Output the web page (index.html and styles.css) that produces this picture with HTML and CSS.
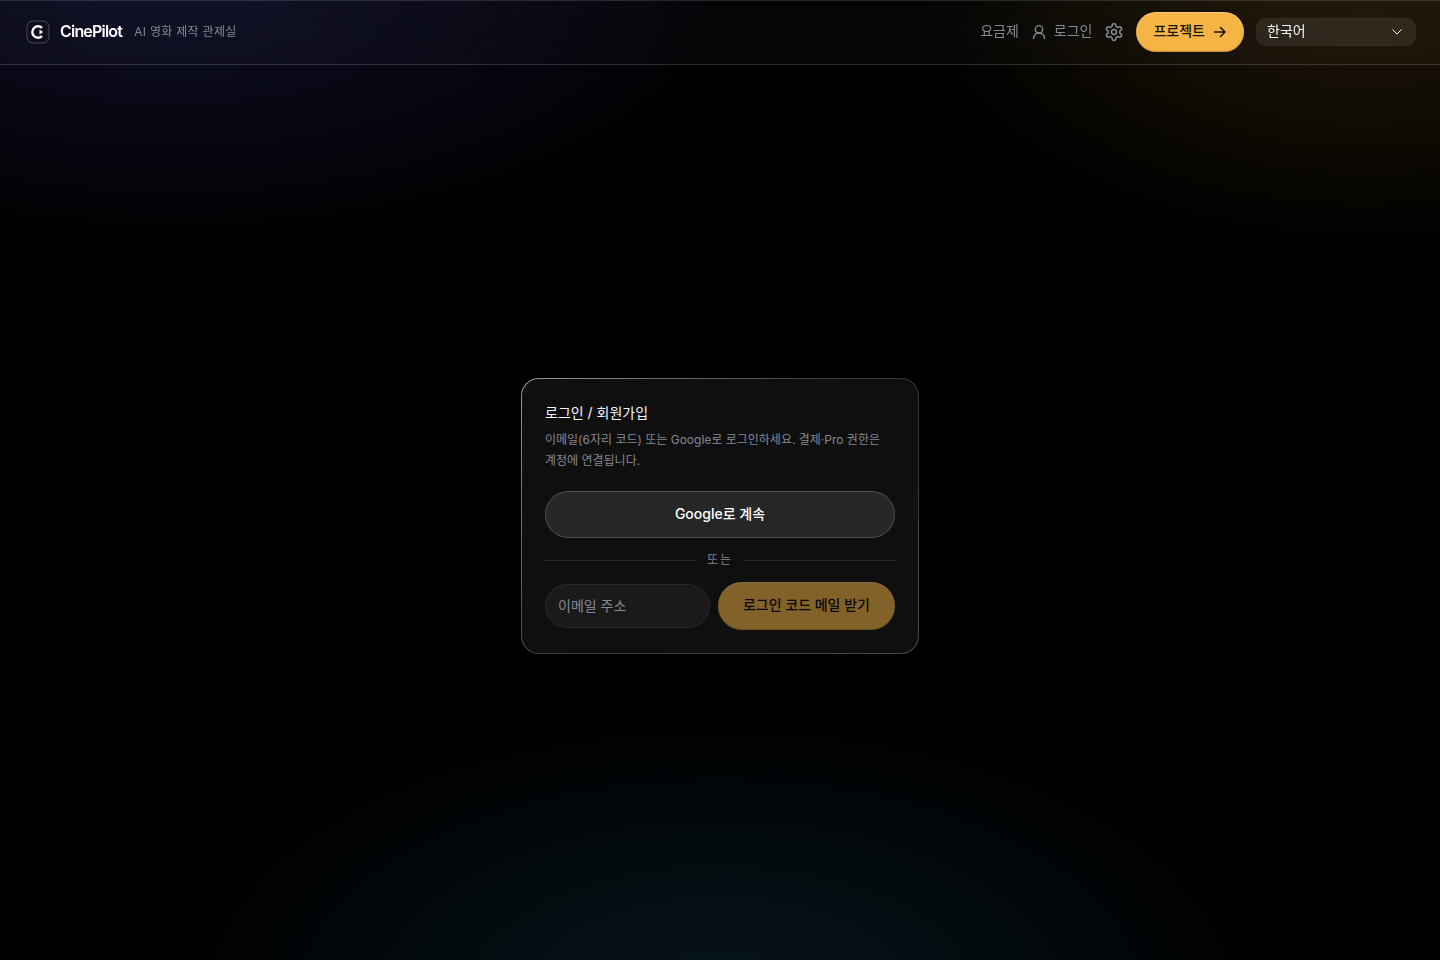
FILE: index.html
```html
<!DOCTYPE html>
<html lang="ko">
<head>
    <meta charset="UTF-8">
    <meta name="viewport" content="width=device-width, initial-scale=1.0">
    <title>CinePilot</title>
    <link rel="stylesheet" href="styles.css">
</head>
<body>
    <header class="topbar">
        <a class="brand" href="#">
            <svg class="brand-logo" viewBox="0 0 24 24" fill="none" aria-hidden="true">
                <rect x="1" y="1" width="22" height="22" rx="6" stroke="#fff" stroke-opacity=".25"/>
                <path d="M16 7.900A5.700 5.700 0 1 0 16 16.100" stroke="#fff" stroke-width="2.400"/>
                <path d="M13.500 9.500v5l3.700-2.500z" fill="#fff"/>
            </svg>
            <span class="brand-name">CinePilot</span>
            <span class="brand-tag">AI 영화 제작 관제실</span>
        </a>
        <nav class="nav">
            <a class="nav-link" href="#">요금제</a>
            <a class="nav-link" href="#">
                <svg width="16" height="16" viewBox="0 0 16 16" fill="none" stroke="currentColor" stroke-width="1.4" stroke-linecap="round" aria-hidden="true">
                    <circle cx="8" cy="5.300" r="3.700"/>
                    <path d="M2.500 14.600C2.500 11.300 4.700 9 8 9s5.500 2.300 5.500 5.600"/>
                </svg>
                로그인
            </a>
            <button class="icon-btn" type="button" aria-label="설정">
                <svg width="20" height="20" viewBox="0 0 24 24" fill="none" stroke="currentColor" stroke-width="1.900" stroke-linecap="round" stroke-linejoin="round" aria-hidden="true">
                    <path d="M12.220 2h-.440a2 2 0 0 0-2 2v.180a2 2 0 0 1-1 1.730l-.430.250a2 2 0 0 1-2 0l-.150-.080a2 2 0 0 0-2.730.730l-.220.380a2 2 0 0 0 .730 2.730l.150.100a2 2 0 0 1 1 1.720v.510a2 2 0 0 1-1 1.740l-.150.090a2 2 0 0 0-.730 2.730l.220.380a2 2 0 0 0 2.730.730l.150-.080a2 2 0 0 1 2 0l.430.250a2 2 0 0 1 1 1.730V20a2 2 0 0 0 2 2h.440a2 2 0 0 0 2-2v-.180a2 2 0 0 1 1-1.730l.430-.250a2 2 0 0 1 2 0l.150.080a2 2 0 0 0 2.730-.730l.220-.390a2 2 0 0 0-.730-2.730l-.150-.080a2 2 0 0 1-1-1.740v-.500a2 2 0 0 1 1-1.740l.150-.090a2 2 0 0 0 .730-2.730l-.220-.380a2 2 0 0 0-2.730-.730l-.150.080a2 2 0 0 1-2 0l-.430-.250a2 2 0 0 1-1-1.730V4a2 2 0 0 0-2-2z"/>
                    <circle cx="12" cy="12" r="3"/>
                </svg>
            </button>
            <a class="btn btn-primary btn-sm" href="#">
                프로젝트
                <svg width="14" height="14" viewBox="0 0 14 14" fill="none" stroke="currentColor" stroke-width="1.500" stroke-linecap="round" stroke-linejoin="round" aria-hidden="true">
                    <path d="M1.500 7h10.500M7.500 2.500L12 7l-4.500 4.500"/>
                </svg>
            </a>
            <div class="lang">
                <select class="lang-select" aria-label="언어">
                    <option>한국어</option>
                    <option>English</option>
                </select>
                <svg class="lang-arrow" width="10" height="6" viewBox="0 0 10 6" fill="none" stroke="currentColor" aria-hidden="true">
                    <path d="M.5.500L5 5 9.500.500"/>
                </svg>
            </div>
        </nav>
    </header>

    <main class="page">
        <section class="card">
            <h1 class="card-title">로그인 / 회원가입</h1>
            <p class="card-text">이메일(6자리 코드) 또는 Google로 로그인하세요. 결제·Pro 권한은 계정에 연결됩니다.</p>
            <button class="btn btn-google" type="button">Google로 계속</button>
            <div class="divider">또는</div>
            <form class="email-form">
                <input class="email-input" type="email" placeholder="이메일 주소" aria-label="이메일 주소">
                <button class="btn btn-primary" type="submit" disabled>로그인 코드 메일 받기</button>
            </form>
        </section>
    </main>
</body>
</html>
```

FILE: styles.css
```css
* {
    box-sizing: border-box;
}
body {
    margin: 0;
    min-height: 100vh;
    display: flex;
    flex-direction: column;
    font-family: Inter, "Noto Sans CJK KR", sans-serif;
    font-size: 14px;
    line-height: 20px;
    word-break: keep-all;
    color: #f5f5f7;
    background:
        radial-gradient(620px 300px at 12% -5%, rgba(84, 88, 230, 0.19), transparent),
        radial-gradient(480px 300px at 95% -5%, rgba(255, 184, 64, 0.14), transparent),
        radial-gradient(560px 290px at 50% 104%, rgba(50, 173, 230, 0.12), transparent),
        #000;
}
a {
    color: inherit;
    text-decoration: none;
}
button, input, select {
    font: inherit;
    color: inherit;
}

/* Top bar */
.topbar {
    display: flex;
    align-items: center;
    justify-content: space-between;
    height: 65px;
    padding: 0 24px 2px;
    background: rgba(255, 255, 255, 0.02);
    backdrop-filter: blur(20px);
    border-top: 1px solid rgba(255, 255, 255, 0.14);
    border-bottom: 1px solid rgba(255, 255, 255, 0.14);
}
.brand {
    display: flex;
    align-items: center;
}
.brand-logo {
    width: 24px;
    height: 24px;
    margin: 0 10px 0 2px;
}
.brand-name {
    padding-bottom: 2px;
    font-size: 16px;
    font-weight: 600;
    letter-spacing: -0.05em;
    color: #fff;
}
.brand-tag {
    margin-left: 12px;
    font-size: 12px;
    letter-spacing: 0.3px;
    color: #868894;
}
.nav {
    display: flex;
    align-items: center;
    gap: 12px;
}
.nav-link {
    display: flex;
    align-items: center;
    gap: 7px;
    padding-bottom: 2px;
    color: #868894;
}
.nav-link svg {
    margin-top: 2px;
}
.icon-btn {
    display: flex;
    padding: 0;
    border: 0;
    background: none;
    color: #868894;
    cursor: pointer;
}
.lang {
    position: relative;
    width: 160px;
}
.lang-select {
    display: block;
    width: 100%;
    height: 28px;
    padding: 0 10px 2px;
    appearance: none;
    border: 1px solid rgba(255, 255, 255, 0.03);
    border-radius: 10px;
    background: rgba(255, 255, 255, 0.08);
}
.lang-arrow {
    position: absolute;
    top: 11px;
    right: 14px;
    pointer-events: none;
}

/* Buttons */
.btn {
    display: inline-flex;
    align-items: center;
    justify-content: center;
    gap: 8px;
    height: 48px;
    padding: 0 25px 2px;
    border: 0;
    border-radius: 24px;
    font-weight: 500;
    white-space: nowrap;
    cursor: pointer;
}
.btn svg {
    margin-top: 2px;
}
.btn-primary {
    color: #1a1408;
    background: #f5b544;
    box-shadow: inset 0 1px 1px rgba(255, 255, 255, 0.3), inset 0 -1px 1px rgba(0, 0, 0, 0.2);
}
.btn-primary:disabled {
    opacity: 0.5;
    color: #000;
    cursor: default;
}
.btn-sm {
    height: 40px;
    padding: 0 17px 2px;
}
.btn-google {
    width: 100%;
    height: 47px;
    border: 1px solid rgba(255, 255, 255, 0.18);
    color: #fff;
    background: #262626;
}

/* Login card */
.page {
    flex: 1;
    display: flex;
    align-items: center;
    justify-content: center;
    padding: 31px 24px 24px;
}
.card {
    width: 100%;
    max-width: 398px;
    padding: 23px;
    border: 1px solid transparent;
    border-radius: 18px;
    background:
        linear-gradient(#0f0f0f, #0f0f0f) padding-box,
        linear-gradient(135deg, #999, #333 50%, #4a4a4a) border-box;
}
.card-title {
    margin: 0 0 5px;
    font-size: 14px;
    font-weight: 400;
    line-height: 22px;
}
.card-text {
    margin: 0 0 20px;
    font-size: 12px;
    line-height: 21px;
    color: #868894;
}
.divider {
    display: flex;
    align-items: center;
    gap: 12px;
    margin: 12px 0;
    font-size: 12px;
    letter-spacing: 2px;
    color: #868894;
}
.divider::before,
.divider::after {
    content: "";
    flex: 1;
    height: 1px;
    background: #2a2a2a;
}
.email-form {
    display: flex;
    align-items: center;
    gap: 8px;
}
.email-input {
    flex: 1;
    min-width: 0;
    height: 44px;
    padding: 0 12px 2px;
    border: 1px solid #282828;
    border-radius: 22px;
    background: #1a1a1a;
}
.email-input::placeholder {
    color: #868894;
}
```
